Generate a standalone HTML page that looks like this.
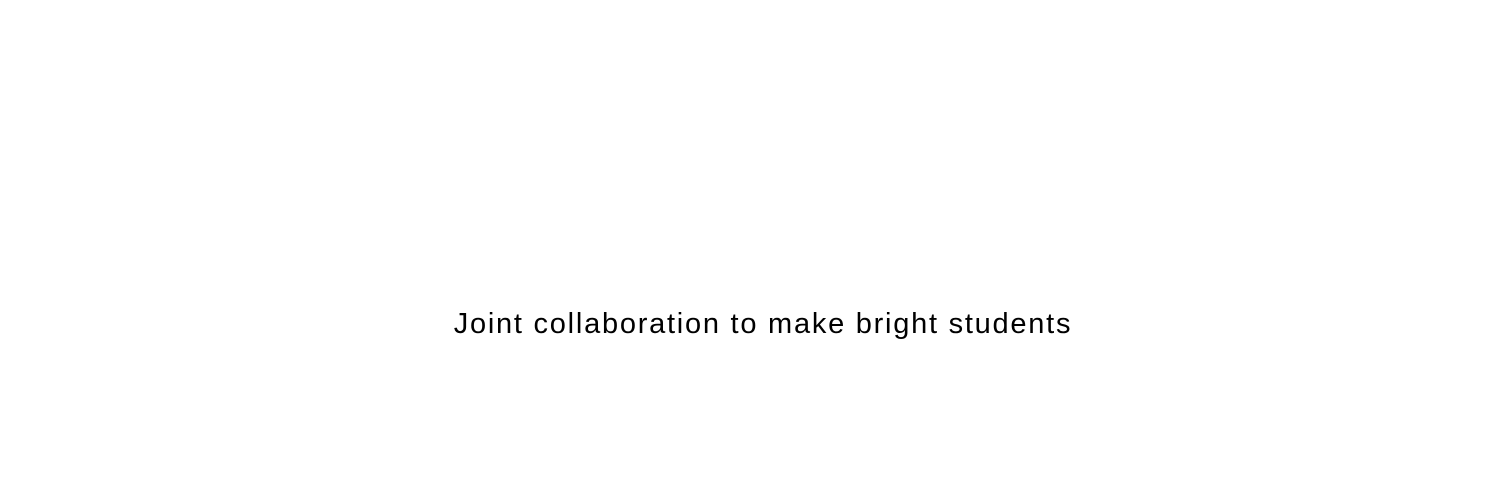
<!DOCTYPE html>
<html><head><style>
html,body{margin:0;padding:0;background:#fff;width:1500px;height:500px;overflow:hidden}
.t{position:absolute;left:354px;top:304px;width:818px;text-align:center;white-space:nowrap;font-family:"Liberation Sans",sans-serif;font-size:29px;line-height:40px;color:#000;letter-spacing:1.75px}
</style></head><body>
<div class="t">Joint collaboration to make bright students</div>
</body></html>
